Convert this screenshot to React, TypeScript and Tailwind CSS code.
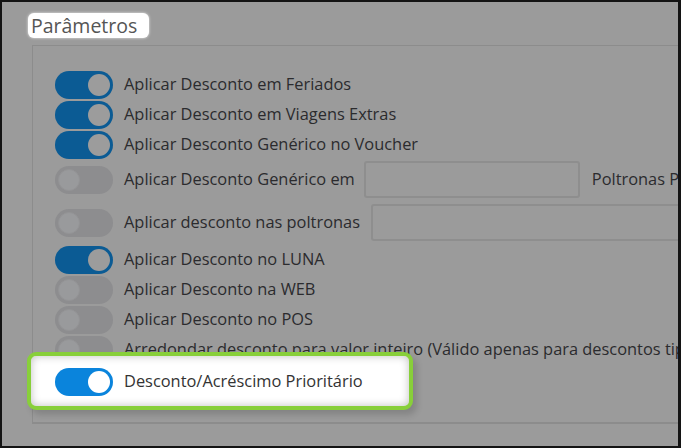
import React from 'react';

type Row = { label: string; on?: boolean; extra?: 'generico' | 'poltronas'; mt?: string };

function Toggle({ on, bright }: { on?: boolean; bright?: boolean }) {
  if (bright) {
    return (
      <div className="flex h-[28px] w-[58px] shrink-0 items-center justify-end rounded-full bg-[#0a84dc] px-[3px]">
        <div className="h-[22px] w-[22px] rounded-full bg-white" />
      </div>
    );
  }
  if (on) {
    return (
      <div className="flex h-[28px] w-[58px] shrink-0 items-center justify-end rounded-full bg-[#0b5b94] px-[3px]">
        <div className="h-[22px] w-[22px] rounded-full bg-[#9c9c9c]" />
      </div>
    );
  }
  return (
    <div className="flex h-[28px] w-[58px] shrink-0 items-center justify-start rounded-full bg-[#8d8d8f] px-[3px]">
      <div className="h-[22px] w-[22px] rounded-full border border-[#949496] bg-[#999a9c]" />
    </div>
  );
}

const rows: Row[] = [
  { label: 'Aplicar Desconto em Feriados', on: true },
  { label: 'Aplicar Desconto em Viagens Extras', on: true },
  { label: 'Aplicar Desconto Genérico no Voucher', on: true },
  { label: 'Aplicar Desconto Genérico em', extra: 'generico', mt: 'mt-[1px]' },
  { label: 'Aplicar desconto nas poltronas', extra: 'poltronas', mt: 'mt-[5px]' },
  { label: 'Aplicar Desconto no LUNA', on: true, mt: 'mt-[3px]' },
  { label: 'Aplicar Desconto na WEB' },
  { label: 'Aplicar Desconto no POS' },
  { label: 'Arredondar desconto para valor inteiro (Válido apenas para descontos tipo percentual)' },
];

export default function App() {
  return (
    <div
      className="relative h-[448px] w-[681px] overflow-hidden border-2 border-r-[3px] border-[#141414] bg-[#9b9b9b]"
      style={{ fontFamily: '"Open Sans", "Noto Sans", sans-serif' }}
    >
      {/* título da seção */}
      <div className="ml-[26px] mt-[11px] inline-flex h-[25px] items-center rounded-[6px] bg-white pl-[3px] pr-[12px] shadow-[0_0_3px_rgba(255,255,255,0.8)]">
        <span className="text-[19.5px] leading-none text-[#555]">Parâmetros</span>
      </div>

      <div className="ml-[30px] mt-[6px] h-[379px] border-l border-t border-b-2 border-[#8c8c8c] pl-[22px] pt-[24px]">
        <div className="flex flex-col">
          {rows.map((r, i) => (
            <div key={i} className={`flex items-center gap-[11px] ${r.extra ? 'h-[38px]' : 'h-[30px]'} ${r.mt ?? ''}`}>
              <Toggle on={r.on} />
              <span className="whitespace-nowrap text-[16.4px] text-[#2b2b2e]">{r.label}</span>
              {r.extra === 'generico' && (
                <>
                  <div className="ml-[-2px] h-[37px] w-[216px] shrink-0 rounded-[3px] border-2 border-[#8e8e8e]" />
                  <span className="ml-[1px] whitespace-nowrap text-[16.4px] text-[#2b2b2e]">Poltronas Permitidas</span>
                </>
              )}
              {r.extra === 'poltronas' && (
                <div className="ml-[0px] h-[37px] w-[340px] shrink-0 rounded-[3px] border-2 border-[#8e8e8e]" />
              )}
            </div>
          ))}

          {/* destaque */}
          <div className="relative mt-[2px] flex h-[30px] items-center gap-[11px]">
            <div className="absolute left-[-28px] top-[-15px] h-[58px] w-[386px] rounded-[9px] border-4 border-[#88cf3a] bg-white shadow-[inset_0_0_8px_rgba(0,0,0,0.25),4px_5px_6px_rgba(0,0,0,0.15)]" />
            <div className="relative">
              <Toggle bright />
            </div>
            <span className="relative whitespace-nowrap text-[16.4px] text-[#333]">Desconto/Acréscimo Prioritário</span>
          </div>
        </div>
      </div>
    </div>
  );
}
